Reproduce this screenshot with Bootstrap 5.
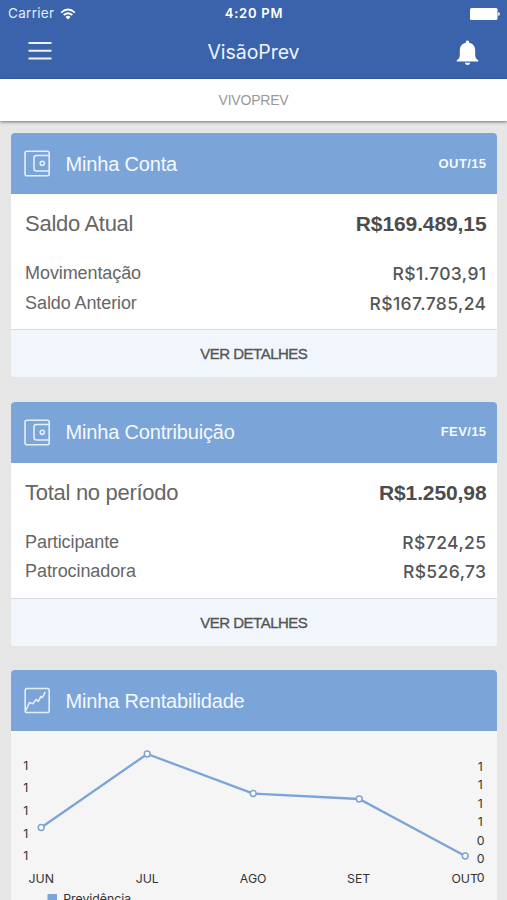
<!DOCTYPE html>
<html lang="pt-BR">
<head>
<meta charset="utf-8">
<meta name="viewport" content="width=device-width, initial-scale=1">
<title>VisãoPrev</title>
<link href="https://cdn.jsdelivr.net/npm/bootstrap@5.3.0/dist/css/bootstrap.min.css" rel="stylesheet">
<style>
body{background:#e6e6e6;font-family:"Liberation Sans",Arial,sans-serif;color:#666;height:900px;white-space:nowrap}
.sf{font-family:Inter,sans-serif}
.top-area{background:#3a63ab;color:#fff;height:79px}
.status-row{height:27px;padding:0 7px 0 8px;font-size:13px}
.status-row>div,.title-row>div{flex:1 1 0}
.carrier{color:#e3ebf9;letter-spacing:.3px;font-size:13.5px;gap:6px}
.clock{font-weight:600;letter-spacing:.75px}
.title-row{height:52px;padding:0 28px 0 28px}
.burger{margin-top:-4px}
.app-title{font-size:19.5px;letter-spacing:-.05px;font-weight:400;color:#eef4ff}
.plan-bar{height:42px;background:#fff;color:#999;font-size:14px;letter-spacing:-.2px;box-shadow:0 1px 3px rgba(0,0,0,.5)}
.stack{padding:12px 10px 0 10.6px;gap:24.7px}
.panel{border:0;border-radius:4px;background:#fff;overflow:hidden}
.panel-head{height:61px;padding:0 10.500px 0 13.500px;background:#7ba4d8;color:#f4f9ff;border:0}
.panel-title{font-size:20px;letter-spacing:-.18px;margin-left:14.500px}
.period{font-size:13px;font-weight:700;letter-spacing:.4px}
.panel-main{height:135px;padding:15px 10.500px 0 14.5px}
.total-row{font-size:22px;line-height:30px;letter-spacing:-.3px;margin-bottom:20px}
.total-row strong{font-size:21px;color:#4c4c4c;letter-spacing:-.1px}
.detail-row{font-size:18px;line-height:29.5px;letter-spacing:-.1px}
.detail-row .sf{font-size:17.500px;color:#555;letter-spacing:.4px;font-weight:500}
.panel-link{height:48px;padding-top:2px;background:#f1f5fc;border-top:1.5px solid #d7dade;color:#555;font-size:15px;font-weight:500;-webkit-text-stroke:.35px #555;text-decoration:none;letter-spacing:-.5px}
.panel-link:hover{color:#555}
.chart-box{background:#f5f5f5;height:210px}
.chart-box text{font-family:Inter,sans-serif;font-size:12.300px;fill:#333}
</style>
<script src="https://cdn.jsdelivr.net/npm/bootstrap@5.3.0/dist/js/bootstrap.bundle.min.js"></script>
</head>
<body class="overflow-hidden">
<header class="top-area sf">
  <div class="status-row d-flex align-items-center">
    <div class="d-flex align-items-center carrier">Carrier
      <svg width="16" height="12" viewBox="0 0 16 12" fill="none" stroke="#fff" stroke-width="1.9"><path d="M1.2 4.6Q8-1.6 14.8 4.6M3.7 7.1Q8 3.3 12.3 7.1"/><path d="M8 11.5 5.5 8.9Q8 6.8 10.5 8.9Z" fill="#fff" stroke="none"/></svg>
    </div>
    <span class="clock">4:20 PM</span>
    <div class="d-flex justify-content-end">
      <svg width="30" height="12" viewBox="0 0 30 12" fill="#fff"><rect width="27.5" height="12" rx="1.5"/><path d="M28.2 4q1.7.4 1.7 2t-1.7 2z"/></svg>
    </div>
  </div>
  <nav class="title-row d-flex align-items-center">
    <div class="d-flex burger"><svg width="24" height="20" viewBox="0 0 24 20" stroke="#edf3ff" stroke-width="2"><path d="M.5 2H23.5M.5 9.8H23.5M.5 17.5H23.5"/></svg></div>
    <span class="app-title">VisãoPrev</span>
    <div class="d-flex justify-content-end"><svg width="23" height="26" viewBox="0 0 23 26" fill="#fff"><path d="M11.5.5c1 0 1.700.7 1.700 1.700v.5c3.900.8 6 3.700 6 8v4.600c0 2.300 1 3.700 3.100 5.200v1H.7v-1c2.100-1.500 3.100-2.900 3.100-5.200v-4.600c0-4.300 2.100-7.200 6-8v-.5c0-1 .7-1.700 1.700-1.700zM8.800 22.800h5.400q-.4 2.200-2.700 2.200t-2.700-2.200z"/></svg></div>
  </nav>
</header>
<div class="plan-bar d-flex align-items-center justify-content-center position-relative">VIVOPREV</div>
<main class="stack d-flex flex-column">
  <section class="card panel flex-shrink-0">
    <div class="panel-head d-flex align-items-center">
      <svg width="27" height="27" viewBox="0 0 27 27" fill="none" stroke="#e4effc" stroke-width="1.6"><path d="M25.2 22.5V24q0 1.7-1.7 1.7H3Q1 25.700 1 23.700V3.200Q1 1.200 3 1.200H23.500Q25.200 1.200 25.200 3V22.500"/><path d="M25.200 5.500H12.500Q10 5.500 10 8V18.500Q10 21 12.500 21H25.200"/><circle cx="18.300" cy="13.300" r="2.100"/></svg>
      <span class="panel-title">Minha Conta</span><span class="period ms-auto">OUT/15</span>
    </div>
    <div class="panel-main">
      <div class="total-row d-flex justify-content-between"><span>Saldo Atual</span><strong>R$169.489,15</strong></div>
      <div class="detail-row d-flex justify-content-between"><span>Movimentação</span><span class="sf">R$1.703,91</span></div>
      <div class="detail-row d-flex justify-content-between"><span>Saldo Anterior</span><span class="sf">R$167.785,24</span></div>
    </div>
    <a href="#" class="panel-link d-flex align-items-center justify-content-center">VER DETALHES</a>
  </section>
  <section class="card panel flex-shrink-0">
    <div class="panel-head d-flex align-items-center">
      <svg width="27" height="27" viewBox="0 0 27 27" fill="none" stroke="#e4effc" stroke-width="1.6"><path d="M25.2 22.5V24q0 1.7-1.7 1.7H3Q1 25.700 1 23.700V3.200Q1 1.200 3 1.200H23.500Q25.200 1.200 25.200 3V22.500"/><path d="M25.200 5.500H12.500Q10 5.500 10 8V18.500Q10 21 12.500 21H25.200"/><circle cx="18.300" cy="13.300" r="2.100"/></svg>
      <span class="panel-title">Minha Contribuição</span><span class="period ms-auto">FEV/15</span>
    </div>
    <div class="panel-main">
      <div class="total-row d-flex justify-content-between"><span>Total no período</span><strong>R$1.250,98</strong></div>
      <div class="detail-row d-flex justify-content-between"><span>Participante</span><span class="sf">R$724,25</span></div>
      <div class="detail-row d-flex justify-content-between"><span>Patrocinadora</span><span class="sf">R$526,73</span></div>
    </div>
    <a href="#" class="panel-link d-flex align-items-center justify-content-center">VER DETALHES</a>
  </section>
  <section class="card panel flex-shrink-0">
    <div class="panel-head d-flex align-items-center">
      <svg width="27" height="27" viewBox="0 0 27 27" fill="none" stroke="#e4effc" stroke-width="1.6"><rect x="1.200" y="1.500" width="24" height="24" rx="1.800"/><path d="M1.800 23.500 5.500 15.500 8.800 16.800 12.200 12.500 14.200 14.500 17 9.500 18.500 10.500 21.200 5" stroke-linejoin="round"/></svg>
      <span class="panel-title">Minha Rentabilidade</span>
    </div>
    <div class="chart-box">
      <svg class="d-block" width="487" height="169" viewBox="10.800 731 487 169">
        <g text-anchor="middle">
          <text x="25.500" y="769.500">1</text><text x="25.500" y="792">1</text><text x="25.500" y="815">1</text><text x="25.500" y="837.500">1</text><text x="25.500" y="860">1</text>
          <text x="480" y="770.500">1</text><text x="480" y="789">1</text><text x="480" y="807.500">1</text><text x="480" y="826">1</text><text x="480.500" y="844.500">0</text><text x="480.500" y="863">0</text><text x="480.500" y="881.500">0</text>
          <text x="41" y="883">JUN</text><text x="147" y="883">JUL</text><text x="253" y="883">AGO</text><text x="358.500" y="883">SET</text><text x="464.500" y="883">OUT</text>
        </g>
        <path d="M41 827.500 147 754 253 793.500 359 799 465 856" fill="none" stroke="#7ba4d8" stroke-width="2.300"/>
        <g fill="#fff" stroke="#7ba4d8" stroke-width="1.500"><circle cx="41" cy="827.500" r="2.900"/><circle cx="147" cy="754" r="2.900"/><circle cx="253" cy="793.500" r="2.900"/><circle cx="359" cy="799" r="2.900"/><circle cx="465" cy="856" r="2.900"/></g>
        <rect x="47.300" y="894" width="9.500" height="9.500" fill="#7ba4d8"/>
        <text x="63" y="903">Previdência</text>
      </svg>
    </div>
  </section>
</main>
</body>
</html>
